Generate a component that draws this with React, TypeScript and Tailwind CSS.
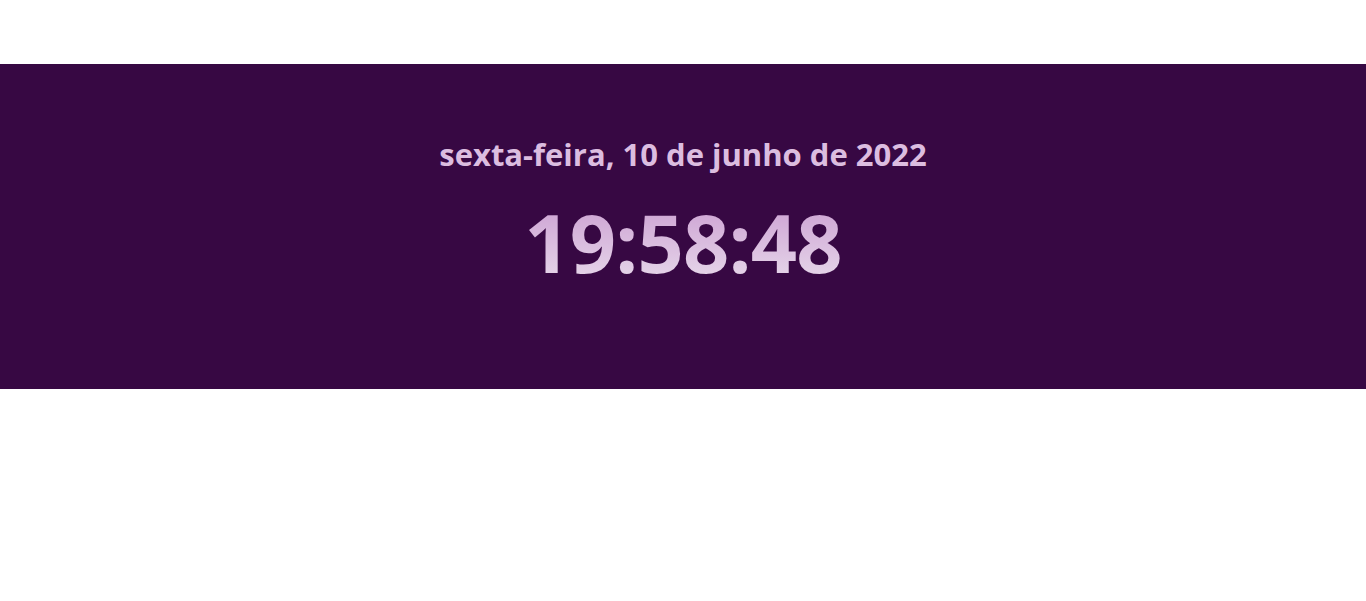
export default function App() {
  return (
    <div className="w-full min-h-screen bg-white pt-16" style={{ fontFamily: '"Open Sans", sans-serif' }}>
      <div className="w-full h-[325px] bg-[#370843] flex flex-col items-center pt-[69px]">
        <p className="text-[31px] font-bold text-[#dcbde0] leading-[42px]">
          sexta-feira, 10 de junho de 2022
        </p>
        <p className="mt-[12px] text-[81px] font-bold tracking-[-0.8px] leading-[110px] bg-gradient-to-b from-[#c796ce] to-[#ebe2ee] bg-clip-text text-transparent">
          19:58:48
        </p>
      </div>
    </div>
  );
}
